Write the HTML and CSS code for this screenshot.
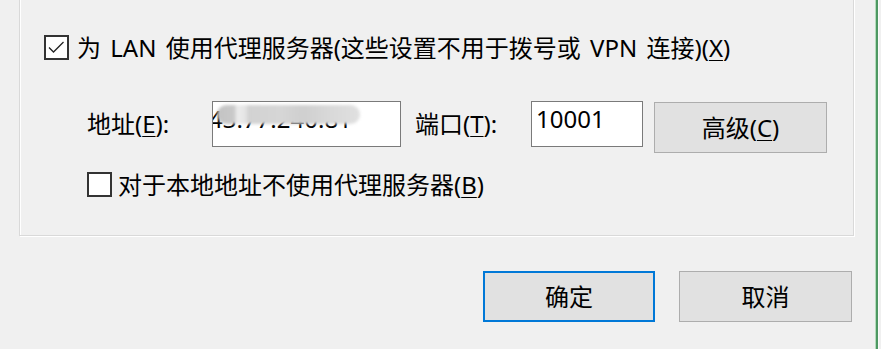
FILE: index.html
```html
<!DOCTYPE html>
<html lang="zh-CN">
<head>
<meta charset="utf-8">
<title>局域网(LAN)设置</title>
<link rel="stylesheet" href="styles.css">
</head>
<body>
<div class="screen">
  <div class="main">
    <div class="group">
      <label class="check row-lan">
        <span class="box">
          <svg width="21" height="21" viewBox="0 0 21 21"><path d="M3 10.5 L7.5 15 L17.5 5" fill="none" stroke="#222" stroke-width="1.3"/></svg>
        </span>
        <span class="check-text">为 LAN 使用代理服务器(这些设置不用于拨号或 VPN 连接)(<u>X</u>)</span>
      </label>
      <div class="fields">
        <span class="label label-addr">地址(<u>E</u>):</span>
        <div class="input input-addr">
          <span class="input-text ip">43.77.240.81</span>
          <span class="blur"></span>
        </div>
        <span class="label label-port">端口(<u>T</u>):</span>
        <div class="input input-port"><span class="input-text">10001</span></div>
        <button class="btn btn-adv">高级(<u>C</u>)</button>
      </div>
      <label class="check row-local">
        <span class="box"></span>
        <span class="check-text">对于本地地址不使用代理服务器(<u>B</u>)</span>
      </label>
    </div>
    <div class="actions">
      <button class="btn btn-ok">确定</button>
      <button class="btn btn-cancel">取消</button>
    </div>
  </div>
  <div class="edge"></div>
</div>
</body>
</html>
```
FILE: styles.css
```css
html, body {
  margin: 0;
  padding: 0;
  background: #f0f0f0;
}
body {
  font-family: "Noto Sans", "Noto Sans CJK SC", sans-serif;
  font-size: 24px;
  color: #000;
}
.screen {
  display: flex;
  width: 881px;
  height: 349px;
  overflow: hidden;
}
.main {
  width: 875px;
  flex: none;
}
.edge {
  width: 4px;
  flex: none;
  background: #4d9862;
  border-left: 1px solid #b5dcbc;
  border-right: 1px solid #fafafa;
  box-sizing: border-box;
}
.group {
  margin-top: -20px;
  margin-left: 19px;
  width: 835px;
  box-sizing: border-box;
  border: 1px solid #d9d9d9;
  box-shadow: inset 1px 1px 0 #fff, 1px 1px 0 #fff;
  padding: 54px 0 38px 24px;
}
.check {
  display: flex;
  align-items: center;
  height: 25px;
  line-height: 25px;
}
.box {
  width: 25px;
  height: 25px;
  box-sizing: border-box;
  border: 2px solid #333;
  background: #fff;
  flex: none;
  display: flex;
  align-items: center;
  justify-content: center;
}
.row-lan .check-text {
  margin-left: 8px;
  white-space: nowrap;
  word-spacing: 3px;
}
.row-local {
  margin-top: 19px;
  margin-left: 43px;
}
.row-local .check-text {
  margin-left: 6px;
  white-space: nowrap;
}
u {
  text-decoration: underline;
  text-decoration-thickness: 1px;
  text-underline-offset: 3px;
}
.fields {
  display: flex;
  align-items: flex-start;
  margin-top: 41px;
  margin-left: 43px;
  height: 52px;
}
.label {
  line-height: 46px;
  height: 46px;
  white-space: nowrap;
}
.label-addr {
  width: 125px;
}
.label-port {
  margin-left: 14px;
  width: 116px;
}
.input {
  position: relative;
  height: 46px;
  box-sizing: border-box;
  border: 1px solid #7a7a7a;
  background: #fff;
  overflow: hidden;
}
.input-addr {
  width: 189px;
}
.input-port {
  width: 112px;
}
.input-text {
  display: block;
  line-height: 30px;
  padding: 2px 0 0 4px;
  white-space: nowrap;
}
.ip {
  padding-left: 0;
  margin-left: -4px;
}
.blur {
  position: absolute;
  left: 4px;
  top: 3px;
  width: 143px;
  height: 19px;
  border-radius: 10px;
  background: linear-gradient(90deg, #c3c3c3 0%, #c9c9c9 12%, #ececec 14%, #e4e4e4 20%, #d2d2d2 22%, #d6d6d6 45%, #cfcfcf 60%, #d9d9d9 80%, #e0e0e0 100%);
  filter: blur(1.5px);
}
.btn {
  font-family: "Noto Sans", "Noto Sans CJK SC", sans-serif;
  font-size: 24px;
  color: #000;
  background: #e1e1e1;
  border: 1px solid #adadad;
  box-sizing: border-box;
  padding: 0;
  margin: 0;
  line-height: 1;
}
.btn-adv {
  margin-left: 11px;
  margin-top: 1px;
  width: 173px;
  height: 51px;
}
.actions {
  display: flex;
  justify-content: flex-end;
  gap: 24px;
  margin-top: 35px;
  padding-right: 23px;
}
.btn-ok {
  width: 172px;
  height: 51px;
  border: 2px solid #0078d7;
}
.btn-cancel {
  width: 173px;
  height: 51px;
}
```
